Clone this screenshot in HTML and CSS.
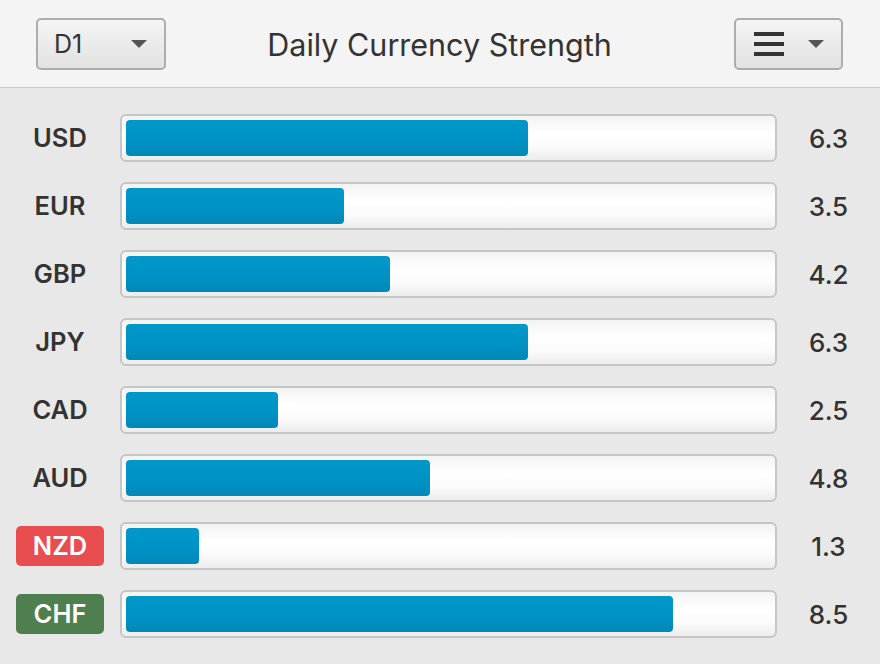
FILE: index.html
```html
<!DOCTYPE html>
<html>
<head>
<meta charset="utf-8">
<link rel="stylesheet" href="styles.css">
</head>
<body>
<div class="app">
  <header class="header">
    <button class="btn btn-tf"><span class="btn-text">D1</span><span class="caret"></span></button>
    <h1 class="title">Daily Currency Strength</h1>
    <button class="btn btn-menu"><span class="burger"><i></i><i></i><i></i></span><span class="caret"></span></button>
  </header>
  <main class="list">
    <div class="row"><div class="label">USD</div><div class="track"><div class="bar" style="width:402px"></div></div><div class="value">6.3</div></div>
    <div class="row"><div class="label">EUR</div><div class="track"><div class="bar" style="width:218px"></div></div><div class="value">3.5</div></div>
    <div class="row"><div class="label">GBP</div><div class="track"><div class="bar" style="width:264px"></div></div><div class="value">4.2</div></div>
    <div class="row"><div class="label">JPY</div><div class="track"><div class="bar" style="width:402px"></div></div><div class="value">6.3</div></div>
    <div class="row"><div class="label">CAD</div><div class="track"><div class="bar" style="width:152px"></div></div><div class="value">2.5</div></div>
    <div class="row"><div class="label">AUD</div><div class="track"><div class="bar" style="width:304px"></div></div><div class="value">4.8</div></div>
    <div class="row"><div class="label badge badge-red">NZD</div><div class="track"><div class="bar" style="width:73px"></div></div><div class="value">1.3</div></div>
    <div class="row"><div class="label badge badge-green">CHF</div><div class="track"><div class="bar" style="width:547px"></div></div><div class="value">8.5</div></div>
  </main>
</div>
</body>
</html>
```
FILE: styles.css
```css
* { box-sizing: border-box; }
html, body { margin: 0; padding: 0; }
body {
  width: 880px;
  height: 664px;
  background: #e8e8e8;
  font-family: Inter, "Noto Sans", sans-serif;
  color: #333;
  overflow: hidden;
}
.header {
  height: 88px;
  background: #f4f4f4;
  border-bottom: 1px solid #c9c9c9;
  display: grid;
  grid-template-columns: 1fr auto 1fr;
  align-items: start;
  padding: 18px 37px 0 36px;
}
.btn {
  height: 52px;
  border: 2px solid #adadad;
  border-radius: 5px;
  background: linear-gradient(#f4f4f4, #e2e2e2);
  display: flex;
  align-items: center;
  padding: 0;
  font-family: inherit;
  color: #333;
}
.btn-tf { width: 130px; padding-left: 16px; justify-self: start; }
.btn-text { font-size: 25px; font-weight: 400; line-height: 30px; }
.btn-tf .caret { margin-left: auto; margin-right: 17px; }
.caret {
  width: 0; height: 0;
  border-left: 8.5px solid transparent;
  border-right: 8.5px solid transparent;
  border-top: 8px solid #555;
}
.btn-menu { width: 109px; padding-left: 18px; justify-self: end; }
.btn-menu .caret { margin-left: 24px; }
.burger { display: flex; flex-direction: column; gap: 6px; }
.burger i { display: block; width: 30px; height: 4px; background: #333; }
.title {
  margin: 7px 0 0;
  font-size: 30.5px;
  font-weight: 400;
  color: #333;
  line-height: 40px;
  white-space: nowrap;
}
.list {
  padding-top: 26px;
  display: flex;
  flex-direction: column;
  gap: 20px;
}
.row {
  display: flex;
  align-items: center;
  height: 48px;
}
.label {
  width: 88px;
  margin-left: 16px;
  height: 40px;
  line-height: 40px;
  text-align: center;
  font-size: 25.5px;
  font-weight: 600;
  color: #333;
}
.badge { border-radius: 5px; color: #fff; }
.badge-red { background: #e84d4f; }
.badge-green { background: #4f7f4f; }
.track {
  margin-left: 16px;
  width: 657px;
  height: 48px;
  border: 2px solid #c6c6c6;
  border-radius: 6px;
  background: linear-gradient(#f3f3f3 0%, #ffffff 40%, #fbfbfb 70%, #ececec 100%);
  padding: 4px;
}
.bar {
  height: 36px;
  border-radius: 4px;
  background: linear-gradient(#0098ca 0%, #0092c4 60%, #0088b8 100%);
}
.value {
  flex: 1;
  text-align: center;
  font-size: 26px;
  font-weight: 500;
  color: #333;
}
```
